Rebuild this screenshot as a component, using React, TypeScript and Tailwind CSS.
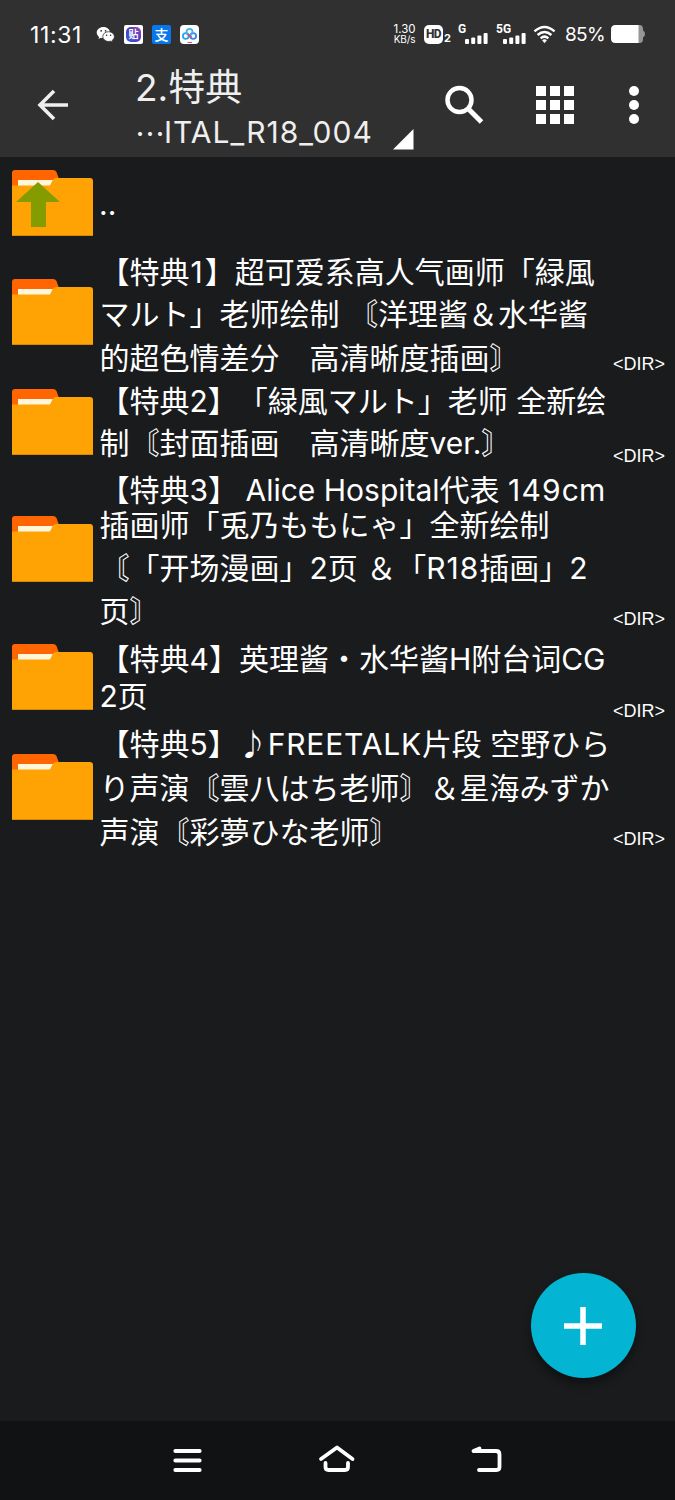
import type { ReactNode } from 'react';
import clsx from 'clsx';

interface Line {
  text: ReactNode;
  className: string;
}

interface Entry {
  id: string;
  rowClass: string;
  textClass: string;
  lines: Line[];
}

const ENTRIES: Entry[] = [
  {
    id: 'bonus-1',
    rowClass: 'h-[127px]',
    textClass: 'pt-[2px]',
    lines: [
      { text: <>【特典<span className="pl-px pr-[2px]">1</span>】超可爱系高人气画师「緑風</>, className: 'h-[42px] leading-[42px]' },
      { text: 'マルト」老师绘制 〘洋理酱＆水华酱', className: 'h-[43px] leading-[43px]' },
      { text: '的超色情差分　高清晰度插画〙', className: 'h-[44px] leading-[44px]' },
    ],
  },
  {
    id: 'bonus-2',
    rowClass: 'h-[92px]',
    textClass: 'pt-[4px]',
    lines: [
      { text: '【特典2】「緑風マルト」老师 全新绘', className: 'h-[42px] leading-[42px]' },
      { text: '制〘封面插画　高清晰度ver.〙', className: 'h-[42px] leading-[42px]' },
    ],
  },
  {
    id: 'bonus-3',
    rowClass: 'h-[163px]',
    textClass: 'pt-[5px]',
    lines: [
      { text: <>【特典3】 <span className="ml-[-1px]">Alice</span> Hospital代表 <span className="tracking-[1.2px]">149</span>cm</>, className: 'h-[34px] leading-[34px]' },
      { text: '插画师「兎乃ももにゃ」全新绘制', className: 'h-[37px] leading-[37px]' },
      { text: <>〘「开场漫画」2页 ＆「<span className="tracking-[1px]">R18</span>插画」2</>, className: 'h-[48px] leading-[48px]' },
      { text: '页〙', className: 'h-[38px] leading-[38px]' },
    ],
  },
  {
    id: 'bonus-4',
    rowClass: 'h-[92px]',
    textClass: 'pt-[9px]',
    lines: [
      { text: '【特典4】英理酱・水华酱H附台词CG', className: 'h-[38px] leading-[38px]' },
      { text: '2页', className: 'h-[36px] leading-[36px]' },
    ],
  },
  {
    id: 'bonus-5',
    rowClass: 'h-[128px]',
    textClass: 'mt-[-1px]',
    lines: [
      { text: <>【特典5】♪<span className="tracking-[0.8px]">FREETALK</span>片段 空野ひら</>, className: 'h-[44px] leading-[44px]' },
      { text: 'り声演〘雲八はち老师〙＆星海みずか', className: 'h-[44px] leading-[44px]' },
      { text: '声演〘彩夢ひな老师〙', className: 'h-[44px] leading-[44px]' },
    ],
  },
];

function Folder({ up = false }: { up?: boolean }) {
  return (
    <svg width="81" height="66" viewBox="0 0 81 66" className="shrink-0">
      <path d="M0 16V3Q0 0 3 0H41Q43.500 0 44.500 2L47 9L40 16Z" fill="#ff6500" />
      <path d="M6 10H42L38 16H6Z" fill="#fff6dc" />
      <path d="M0 15.500H38L41 9.500Q42 8 44 8H78Q81 8 81 11V66H0Z" fill="#ffa305" />
      <path d="M0 65H81V66H0Z" fill="#d98700" />
      {up && <path d="M26 12L48 32H34V57H19V32H4Z" fill="#849c00" />}
    </svg>
  );
}

function Signal({ label }: { label: string }) {
  return (
    <div className="relative h-[20px] w-[30px]">
      <span className="absolute left-0 top-0 font-[Roboto] text-[12px] font-bold leading-[11px]">{label}</span>
      <svg width="23" height="12" viewBox="0 0 23 12" className="absolute bottom-0 right-0" fill="#fff">
        <rect x="0" y="7" width="4" height="5" rx="1" />
        <rect x="6.200" y="5.500" width="4" height="6.500" rx="1" />
        <rect x="12.400" y="3.500" width="4" height="8.500" rx="1" />
        <rect x="18.600" y="1" width="4" height="11" rx="1" />
      </svg>
    </div>
  );
}

function StatusBar() {
  return (
    <div className="flex h-[68px] items-center pl-[30px] text-white">
      <span className="mt-[2px] w-[66px] text-[23px] leading-none tracking-[0.6px]">11:31</span>
      <svg width="19" height="17" viewBox="0 0 19 17">
        <path d="M7.500 1C3.600 1 .7 3.500 .7 6.600c0 1.800 1 3.300 2.400 4.300L2.500 13l2.400-1.200c.8.200 1.700.4 2.600.4C11.300 12.200 14 9.700 14 6.600S11.300 1 7.500 1Z" fill="#fff" />
        <path d="M12.600 5.700c-3.300 0-5.800 2.200-5.800 4.900s2.500 4.900 5.800 4.900c.7 0 1.400-.1 2-.3l2.200 1.100-.6-1.900c1.300-.9 2.200-2.300 2.200-3.800 0-2.700-2.500-4.900-5.800-4.900Z" fill="#fff" stroke="#303030" strokeWidth=".8" />
        <g fill="#303030">
          <circle cx="5.200" cy="4.800" r=".9" />
          <circle cx="9.600" cy="4.800" r=".9" />
          <circle cx="10.600" cy="9.200" r=".8" />
          <circle cx="14.600" cy="9.200" r=".8" />
        </g>
      </svg>
      <div className="ml-[9px] flex size-[19px] items-center justify-center rounded-[2px] bg-white">
        <div className="flex size-[15px] items-center justify-center rounded-[5px] bg-gradient-to-tr from-[#2c62e8] via-[#4a35c0] to-[#a145b8] font-[Noto_Sans_CJK_SC] text-[10px] font-bold leading-none">
          贴
        </div>
      </div>
      <div className="ml-[9px] flex size-[19px] items-center justify-center rounded-[2px] bg-[#0877ee] font-[Noto_Sans_CJK_SC] text-[14px] font-medium leading-none">
        支
      </div>
      <div className="ml-[9px] flex size-[19px] items-center justify-center rounded-[4px] bg-white">
        <svg width="17" height="17" viewBox="0 0 17 17" fill="none" strokeWidth="1.800">
          <circle cx="4.800" cy="10" r="2.900" stroke="#22a7ee" />
          <circle cx="12.200" cy="10" r="2.900" stroke="#3b86f0" />
          <circle cx="8.500" cy="5.800" r="3" stroke="#3bb4ee" />
          <path d="M6.800 8.200L10.500 11.500" stroke="#e5476a" />
          <path d="M6.500 16.500H11" stroke="#e5476a" strokeWidth="1" />
        </svg>
      </div>
      <div className="ml-[193px] w-[25px] text-center text-[10px] leading-[10px]">
        <div className="text-[11.5px]">1.30</div>
        <div className="tracking-[-0.1px]">KB/s</div>
      </div>
      <div className="ml-[7px] flex h-[19px] w-[19px] items-center justify-center rounded-[5px] bg-white font-[Roboto] text-[12px] font-extrabold leading-none tracking-[-0.5px] text-[#303030]">
        HD
      </div>
      <span className="mt-[9px] w-[15px] pl-px text-[11px] font-bold leading-none">2</span>
      <Signal label="G" />
      <div className="w-[8px]" />
      <Signal label="5G" />
      <svg width="23" height="19" viewBox="0 0 24 19" className="ml-[7px]" fill="none" stroke="#fff" strokeWidth="2.600">
        <path d="M1.500 6.300Q12-2.800 22.500 6.300" />
        <path d="M4.800 10Q12 3.800 19.200 10" />
        <path d="M8 13.500Q12 10 16 13.500" />
        <path d="M9.500 15.500Q12 13.500 14.500 15.500L12 18.500Z" fill="#fff" stroke="none" />
      </svg>
      <span className="ml-[9px] w-[46px] whitespace-nowrap text-[19px] leading-none tracking-[-0.7px]">85%</span>
      <svg width="35" height="18" viewBox="0 0 35 18">
        <path d="M27 0h1.500Q32 0 32 4v1.500q2 .5 2 3.500t-2 3.500V14q0 4-3.500 4H27Z" fill="#969696" />
        <path d="M4.500 0H27.500V18H4.500Q0 18 0 13.500V4.500Q0 0 4.500 0Z" fill="#fff" />
      </svg>
    </div>
  );
}

function Toolbar() {
  return (
    <div className="flex h-[89px] text-[#efefef]">
      <svg width="32" height="32" viewBox="0 0 32 32" className="ml-[37px] mt-[21px]" fill="none" stroke="#efefef" strokeWidth="3.600">
        <path d="M31 16H3M17 2L3 16L17 30" />
      </svg>
      <div className="ml-[66px] w-[258px] whitespace-pre">
        <div className="h-[42px] text-[37px] leading-[40px]">2.特典</div>
        <div className="flex h-[44px] text-[30px] leading-[44px]">
          <span className="w-[29px] font-[Noto_Sans_CJK_SC]">…</span>
          <span className="tracking-[1px]">ITAL_R18_004</span>
        </div>
      </div>
      <svg width="21" height="21" viewBox="0 0 21 21" className="mt-[61px]">
        <path d="M20.500 0V20.500H0Z" fill="#fff" />
      </svg>
      <svg width="39" height="39" viewBox="0 0 39 39" className="ml-[31px] mt-[17px]" fill="none" stroke="#fff" strokeWidth="4.500">
        <circle cx="14.500" cy="15" r="12" />
        <path d="M23.500 24L36.500 37" strokeWidth="5" />
      </svg>
      <svg width="38" height="38" viewBox="0 0 38 38" className="ml-[52px] mt-[18px]" fill="#fff">
        {[0, 14, 28].map((y) => [0, 14, 28].map((x) => <rect key={`${x}-${y}`} x={x} y={y} width="10" height="10" />))}
      </svg>
      <svg width="10" height="38" viewBox="0 0 10 38" className="ml-[55px] mt-[18px]" fill="#fff">
        <circle cx="5" cy="5" r="5" />
        <circle cx="5" cy="19" r="5" />
        <circle cx="5" cy="33" r="5" />
      </svg>
    </div>
  );
}

function EntryRow({ entry }: { entry: Entry }) {
  return (
    <div className={clsx('flex pl-[12px] pr-[10px]', entry.rowClass)}>
      <div className="flex items-center self-stretch pb-px">
        <Folder />
      </div>
      <div className={clsx('ml-[6.5px] w-[513.5px] whitespace-pre text-[30px]', entry.textClass)}>
        {entry.lines.map((line, i) => (
          <div key={i} className={line.className}>{line.text}</div>
        ))}
      </div>
      <span className="mb-[3px] self-end font-['Liberation_Sans'] text-[18px] leading-[18px]">&lt;DIR&gt;</span>
    </div>
  );
}

function NavBar() {
  return (
    <nav className="flex h-[79px] bg-[#111214]">
      <svg width="675" height="79" viewBox="0 0 675 79" fill="none" stroke="#fff" strokeWidth="3.800" strokeLinecap="round" strokeLinejoin="round">
        <path d="M175.300 30H199.700M175.300 39.500H199.700M175.300 49H199.700" />
        <path d="M321 38L337 26.500L352.500 38M325.500 42V46Q325.500 49 328.500 49H345Q348 49 348 46V42" />
        <path d="M479.500 27.500L473.500 30H496Q499.500 30 499.500 33.500V46Q499.500 49 496.500 49H479" />
      </svg>
    </nav>
  );
}

export default function App() {
  return (
    <div className="relative flex h-[1500px] w-[675px] flex-col overflow-hidden bg-[#1a1b1d] font-[Inter,'Noto_Sans_CJK_SC',sans-serif] text-white [text-spacing-trim:space-all]">
      <header className="h-[157px] shrink-0 bg-[#303030]">
        <StatusBar />
        <Toolbar />
      </header>
      <main className="flex-1">
        <div className="flex h-[92px] items-center pl-[12px]">
          <Folder up />
          <span className="ml-[6px] mt-[2px] text-[30px] leading-[42px]">..</span>
        </div>
        {ENTRIES.map((entry) => (
          <EntryRow key={entry.id} entry={entry} />
        ))}
      </main>
      <NavBar />
      <button className="absolute bottom-[122px] right-[39.5px] flex size-[105px] items-center justify-center rounded-full bg-[#03b5d2] shadow-[0_6px_10px_rgba(0,0,0,0.4)]">
        <svg width="38" height="38" viewBox="0 0 38 38" stroke="#fff" strokeWidth="5.500">
          <path d="M19 0V38M0 19H38" />
        </svg>
      </button>
    </div>
  );
}
